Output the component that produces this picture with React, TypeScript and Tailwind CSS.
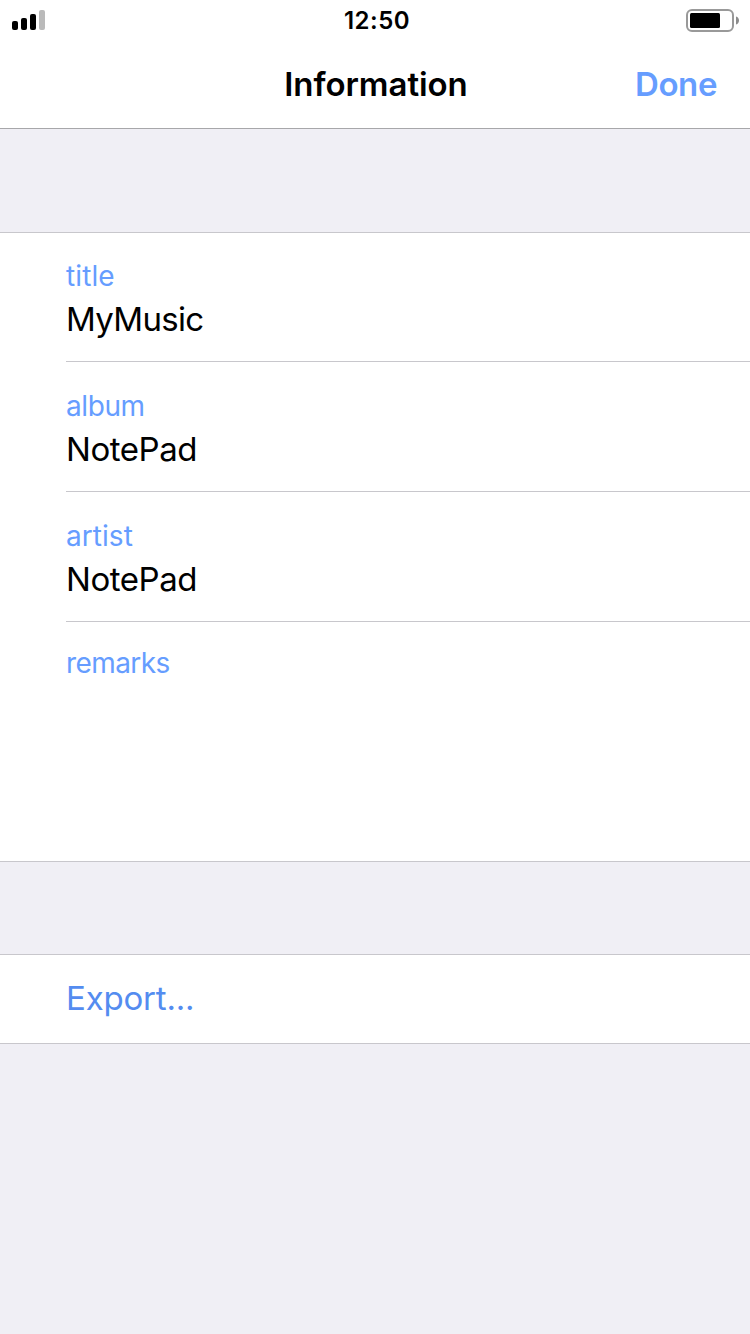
import React from "react";

const fields = [
  { label: "title", value: "MyMusic", labelClass: "tracking-[0.1px]", valueClass: "tracking-[-0.7px]" },
  { label: "album", value: "NotePad", labelClass: "tracking-[-0.4px]", valueClass: "tracking-[-0.45px]" },
  { label: "artist", value: "NotePad", labelClass: "tracking-[0.05px]", valueClass: "tracking-[-0.45px]" },
];

const StatusBar = () => {
  return (
    <div className="h-10 pl-3 pr-[10px] grid grid-cols-3 items-center">
      <svg width="34" height="20" viewBox="0 0 34 20">
        <rect x="0" y="11" width="6" height="9" rx="2" />
        <rect x="9" y="8" width="6" height="12" rx="2" />
        <rect x="18" y="4" width="6" height="16" rx="2" />
        <rect x="27" y="0" width="6" height="20" rx="2" fill="#bababa" />
      </svg>
      <span className="pt-[2px] pl-[2px] text-center text-2xl font-semibold tracking-[0.5px]">
        12:50
      </span>
      <svg width="54" height="24" viewBox="0 0 54 24" className="justify-self-end">
        <rect x="1" y="2" width="46" height="21" rx="5" fill="none" stroke="#999" strokeWidth="2" />
        <rect x="4" y="5" width="30" height="15" rx="1.5" />
        <path d="M50 8.5c4 1 4 7 0 8z" fill="#8c8c8c" />
      </svg>
    </div>
  );
};

const App = () => {
  return (
    <div className="w-[750px] h-[1334px] bg-[#f0eff5] font-['Inter',sans-serif] text-black overflow-hidden">
      <header className="h-[129px] bg-white border-b border-[#a7a7aa]">
        <StatusBar />
        <div className="h-[88px] pt-[2px] px-8 grid grid-cols-3 items-center text-[33px] font-semibold">
          <h1 className="col-start-2 pl-[2px] text-center tracking-[-0.05px]">Information</h1>
          <button className="pr-px text-right tracking-[-0.4px] text-[#669dff]">Done</button>
        </div>
      </header>
      <section className="mt-[103px] h-[630px] bg-white border-y border-[#c8c7cc] pl-[66px]">
        {fields.map((field) => (
          <div
            key={field.label}
            className="h-[130px] first:h-[129px] border-b border-[#c8c7cc] flex flex-col justify-end pb-5"
          >
            <label className={`text-[28px] leading-[42px] text-[#669dff] ${field.labelClass}`}>
              {field.label}
            </label>
            <p className={`text-[33px] leading-[44px] ${field.valueClass}`}>{field.value}</p>
          </div>
        ))}
        <label className="block pt-5 text-[28px] leading-[42px] tracking-[-0.6px] text-[#669dff]">
          remarks
        </label>
      </section>
      <section className="mt-[92px] h-[90px] bg-white border-y border-[#c8c7cc] pl-[66px] flex items-center">
        <button className="text-[33px] tracking-[-0.2px] text-[#548cf0]">Export...</button>
      </section>
    </div>
  );
};

export default App;
